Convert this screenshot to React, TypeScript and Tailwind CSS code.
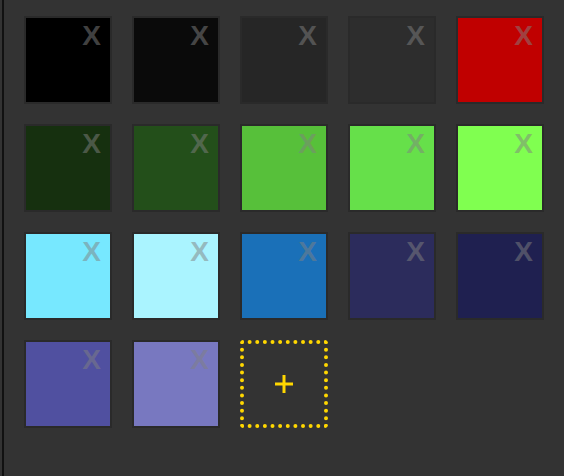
import React from "react";

const swatches = [
  "#000000", "#0a0a0a", "#262626", "#2d2d2d", "#c00000",
  "#16300f", "#234f1a", "#57c03a", "#66e04a", "#80ff50",
  "#77e8ff", "#aaf4ff", "#1a70b8", "#2c2c5c", "#1f2050",
  "#5050a0", "#7878c0",
];

function Swatch({ color }: { color: string }) {
  return (
    <div
      className="relative h-[88px] w-[88px] border-2 border-[#2a2a2a]"
      style={{ backgroundColor: color }}
    >
      <span className="absolute right-[9px] top-[4px] text-[28px] font-bold leading-none text-[#808080]/50">
        X
      </span>
    </div>
  );
}

function AddSwatch() {
  return (
    <button className="flex h-[88px] w-[88px] items-center justify-center rounded-[4px] border-4 border-dotted border-[#ffd700]">
      <svg width="20" height="20" viewBox="0 0 20 20">
        <path d="M1 10h18M10 1v18" stroke="#ffd700" strokeWidth="3" />
      </svg>
    </button>
  );
}

export default function App() {
  return (
    <div
      className="flex h-[476px] w-full bg-[#333333]"
      style={{ fontFamily: '"Liberation Sans", Arial, sans-serif' }}
    >
      <div className="ml-[2px] w-[2px] bg-[#111111]" />
      <div className="pl-[20px] pt-[16px]">
        <div className="grid grid-cols-[repeat(5,88px)] gap-[20px]">
          {swatches.map((c) => (
            <Swatch key={c} color={c} />
          ))}
          <AddSwatch />
        </div>
      </div>
    </div>
  );
}
